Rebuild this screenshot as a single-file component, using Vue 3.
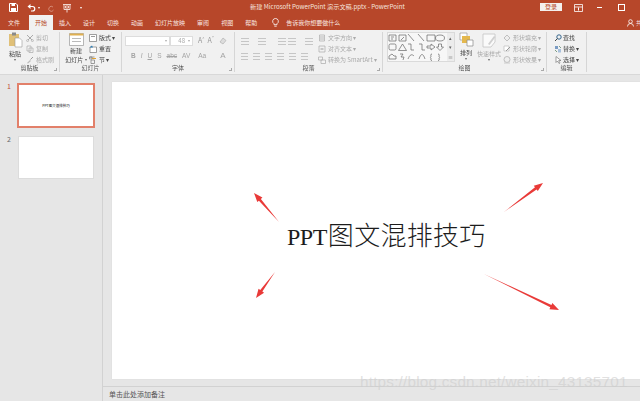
<template>
  <div class="app">
    <svg class="sprite" width="0" height="0">
      <symbol id="i-cut" viewBox="0 0 8 8"><path d="M1 1l5 5M7 1L2 6" fill="none" stroke="#aaa"/><circle cx="1.6" cy="6.6" r="1" fill="none" stroke="#aaa" stroke-width=".7"/><circle cx="6.4" cy="6.6" r="1" fill="none" stroke="#aaa" stroke-width=".7"/></symbol>
      <symbol id="i-copy" viewBox="0 0 8 8"><path d="M1 1h4v5H1zM3 3h4v4.500H3z" fill="#f4f4f4" stroke="#aaa" stroke-width=".7"/></symbol>
      <symbol id="i-brush" viewBox="0 0 8 8"><path d="M1 7l3-3 1 1-3 2.500z" fill="#bbb"/><path d="M4.500 3.500L7 1" stroke="#999" fill="none"/></symbol>
      <symbol id="i-layout" viewBox="0 0 8 8"><path d="M.5 .5h7v7h-7z" fill="#fff" stroke="#777" stroke-width=".7"/><path d="M2 2h4v1H2z" fill="#999"/></symbol>
      <symbol id="i-reset" viewBox="0 0 8 8"><path d="M1 2h6.500v5.500H1z" fill="#fff" stroke="#777" stroke-width=".7"/><path d="M.5 2.500L3 .5l1 2z" fill="#2b7cb5"/></symbol>
      <symbol id="i-section" viewBox="0 0 8 8"><path d="M.5 1h5M.5 1v2h2.500V1zM2 4h3.500v3.500H2z" fill="none" stroke="#777" stroke-width=".7"/><path d="M3 2h4v1H3z" fill="#e0a030"/></symbol>
      <symbol id="i-textdir" viewBox="0 0 8 8"><path d="M1.500 1h5v6h-5z" fill="none" stroke="#aaa" stroke-width=".7"/><path d="M3 2v4M5 2v4" stroke="#bbb"/></symbol>
      <symbol id="i-align" viewBox="0 0 8 8"><path d="M1 1h6v6H1z" fill="none" stroke="#aaa" stroke-width=".7"/><path d="M2.500 4h3" stroke="#999"/></symbol>
      <symbol id="i-smart" viewBox="0 0 8 8"><path d="M.5 1h4v3h-4zM3 4h4.500v3.500H3z" fill="#f4f4f4" stroke="#aaa" stroke-width=".7"/></symbol>
      <symbol id="i-fill" viewBox="0 0 8 8"><path d="M4 1l3 3-3 3-3-3z" fill="#eee" stroke="#aaa" stroke-width=".7"/></symbol>
      <symbol id="i-line" viewBox="0 0 8 8"><path d="M1 1h5v5H1z" fill="#fff" stroke="#bbb" stroke-width=".7"/><path d="M3 6l4-4" stroke="#999"/></symbol>
      <symbol id="i-effect" viewBox="0 0 8 8"><circle cx="4" cy="3.500" r="3" fill="#eee" stroke="#aaa" stroke-width=".7"/><path d="M1 7h6" stroke="#ccc"/></symbol>
      <symbol id="i-find" viewBox="0 0 8 8"><circle cx="5" cy="3" r="2.200" fill="none" stroke="#33658c"/><path d="M3.500 4.500L1 7" stroke="#444"/></symbol>
      <symbol id="i-replace" viewBox="0 0 8 8"><path d="M1 1h3v3H1z" fill="#7b9cc4"/><path d="M4 4h3v3.500H4z" fill="#a8c0dc"/><path d="M5 1l2 2M1 5l2 2" stroke="#4a7a58" fill="none" stroke-width=".7"/></symbol>
      <symbol id="i-select" viewBox="0 0 8 8"><path d="M2 .5v6l1.500-1.500 1.500 2.500 1-.6L4.700 4.500H7z" fill="#fff" stroke="#666" stroke-width=".6"/></symbol>
    </svg>

    <header class="titlebar">
      <div class="qat">
        <svg width="9" height="9" viewBox="0 0 9 9"><path d="M.5 .5h6.500l1.500 1.500v6.500h-8z" fill="none" stroke="#fff"/><path d="M2.500 .5h3.500v2.500h-3.500zM2 5h5v3.500H2z" fill="#fff"/></svg>
        <svg class="undo" width="9" height="9" viewBox="0 0 9 9"><path d="M2 3.500h3.500a2.200 2.200 0 0 1 0 4.500H4" fill="none" stroke="#fff" stroke-width="1.200"/><path d="M.5 3.500L3.500 1v5z" fill="#fff"/></svg>
        <span class="caret-w"></span>
        <svg class="redo" width="8" height="8" viewBox="0 0 8 8"><path d="M6 3a2.500 2.500 0 1 0 .5 3" fill="none" stroke="#d58a75"/></svg>
        <svg class="present" width="10" height="10" viewBox="0 0 10 10"><path d="M1 1.500h8M2 1.500v5h6v-5" fill="none" stroke="#f0d5cd"/><path d="M3.500 3h3v2h-3zM5 6.500v3" stroke="#f0d5cd" fill="none"/></svg>
        <span class="caret-w last"></span>
      </div>
      <div class="doc-title">新建 Microsoft PowerPoint 演示文稿.pptx  -  PowerPoint</div>
      <button class="login">登录</button>
      <svg class="win first" width="9" height="8" viewBox="0 0 9 8"><path d="M.5 .5h8v7h-8zM.5 3h8" fill="none" stroke="#fff" stroke-width=".8"/><path d="M4.500 3.500v3" stroke="#fff"/></svg>
      <span class="win-min"></span>
      <span class="win-max"></span>
    </header>

    <nav class="tabs">
      <span v-for="t in tabs" :key="t" class="tab" :class="{ active: t === '开始', file: t === '文件' }">{{ t }}</span>
      <svg class="bulb" width="7" height="9" viewBox="0 0 7 9"><path d="M3.500 .5a2.800 2.800 0 0 1 1.500 5.200v1H2v-1A2.800 2.800 0 0 1 3.500 .5zM2.300 8.200h2.400" fill="none" stroke="#fff" stroke-width=".8"/></svg>
      <span class="tell">告诉我你想要做什么</span>
      <span class="share">
        <svg width="7" height="8" viewBox="0 0 7 8"><circle cx="3.500" cy="2.500" r="1.800" fill="none" stroke="#fff" stroke-width=".8"/><path d="M.5 7.500a3 3 0 0 1 6 0" fill="none" stroke="#fff" stroke-width=".8"/></svg>
        共享
      </span>
    </nav>

    <section class="ribbon">
      <div class="grp" style="width: 60px">
        <div class="body">
          <div class="big paste">
            <svg width="15" height="16" viewBox="0 0 15 16"><path d="M1 2h10v12H1z" fill="#e0c078"/><path d="M4 .5h4v3H4z" fill="#8a8a8a"/><path d="M7 6h4.500L14 8.500V15H7z" fill="#fff" stroke="#999" stroke-width=".6"/></svg>
            <span>粘贴</span>
            <i class="caret"></i>
          </div>
          <div class="col off">
            <div v-for="r in clipboard" :key="r.text" class="row"><svg><use :href="'#i-' + r.icon" /></svg>{{ r.text }}</div>
          </div>
        </div>
        <div class="label">剪贴板</div>
        <i class="launch"></i>
      </div>

      <div class="grp" style="width: 62px">
        <div class="body slides">
          <div class="big newslide">
            <svg width="15" height="14" viewBox="0 0 15 14"><path d="M.5 1.500h14v12H.5z" fill="#fff" stroke="#999" stroke-width=".7"/><path d="M.5 1.500h14v2H.5z" fill="#e0b050"/><path d="M3 6h9v1H3zM3 9h9v1H3z" fill="#bbb"/></svg>
            <span>新建</span>
            <span class="nowrap">幻灯片 <i class="caret in"></i></span>
          </div>
          <div class="col">
            <div v-for="r in slidesMenu" :key="r.text" class="row"><svg><use :href="'#i-' + r.icon" /></svg>{{ r.text }}</div>
          </div>
        </div>
        <div class="label">幻灯片</div>
      </div>

      <div class="grp" style="width: 113px">
        <div class="body font">
          <div class="inputs">
            <span class="inp name"><i class="caret"></i></span>
            <span class="inp size">48<i class="caret"></i></span>
            <span class="glyph g1">A<sup>^</sup></span>
            <span class="glyph g2">A<sup>ˇ</sup></span>
            <svg class="eraser" width="8" height="8" viewBox="0 0 8 8"><path d="M1 5l3-4 3 2.500-3 3.500z" fill="#ddd" stroke="#aaa" stroke-width=".6"/></svg>
          </div>
          <div class="fmt">
            <b>B</b><em>I</em><u>U</u><span>S</span><s>abc</s><span>AV</span><span class="wide">Aa</span><span class="wide2">A</span>
          </div>
        </div>
        <div class="label">字体</div>
        <i class="launch"></i>
      </div>

      <div class="grp" style="width: 148px">
        <div class="body para">
          <div class="para-icons">
            <div class="para-row">
              <i v-for="n in 5" :key="n" class="lines" :class="'p' + n"></i>
            </div>
            <div class="para-row second">
              <i v-for="n in 6" :key="n" class="lines flat"></i>
            </div>
          </div>
          <div class="col off">
            <div v-for="r in paraMenu" :key="r.text" class="row"><svg><use :href="'#i-' + r.icon" /></svg>{{ r.text }}</div>
          </div>
        </div>
        <div class="label">段落</div>
        <i class="launch"></i>
      </div>

      <div class="grp" style="width: 164px">
        <div class="body draw">
          <div class="gallery">
            <svg width="59" height="28" viewBox="0 0 59 28" fill="none" stroke="#666" stroke-width=".7">
              <!-- row 1: text boxes, lines, rectangle, ellipse -->
              <path d="M1 2h7v6H1zM3 4h3M3 6h2M11 2h7v6h-7zM13 7l3-3" />
              <path d="M20 1l6 7M30 1l6 7" />
              <path d="M39 2h8v6h-8z" />
              <ellipse cx="52" cy="5" rx="4.500" ry="3" />
              <!-- row 2: rounded rect, triangle, elbows, arrows -->
              <rect x="1" y="11" width="7" height="6" rx="1.500" />
              <path d="M14.500 11l4 6.500h-8zM20 11h3v6h3M31 11h3v6h3" />
              <path d="M39 13h4v-2l4 3-4 3v-2h-4zM50.500 11h3v3h2l-3.500 3.500-3.500-3.500h2z" />
              <!-- row 3: freeform, cross, curves, braces -->
              <path d="M1 26v-3l3-2 2 2 2 0v3zM12 21h3l-2 3h3l-1 3" />
              <path d="M20 26c2-5 4-5 6-3M31 26c2-6 4-6 6 0" />
              <path d="M44 21c-2 0-1 2-1 2.500s-1 1-1 1 1 .5 1 1 -1 2 1 2M50 21c2 0 1 2 1 2.500s1 1 1 1-1 .5-1 1 1 2-1 2" />
            </svg>
            <div class="scroll"><i>▴</i><i>▾</i><i>≡</i></div>
          </div>
          <div class="big arrange">
            <svg width="15" height="15" viewBox="0 0 15 15"><path d="M1 1h7v7H1z" fill="#fff" stroke="#999" stroke-width=".7"/><path d="M3 4h8v7H3z" fill="#e4b84e"/><path d="M8 8h6v6H8z" fill="#fff" stroke="#888" stroke-width=".7"/></svg>
            <span>排列</span>
            <i class="caret"></i>
          </div>
          <div class="big style off">
            <svg width="15" height="16" viewBox="0 0 15 16"><path d="M1 2h12v8l-4 5H1z" fill="#fafafa" stroke="#c4c4c4" stroke-width=".8"/><path d="M6 12l6-8 1.500 1-6 8z" fill="#d0d0d0"/></svg>
            <span>快速样式</span>
            <i class="caret"></i>
          </div>
          <div class="col off">
            <div v-for="r in shapeMenu" :key="r.text" class="row"><svg><use :href="'#i-' + r.icon" /></svg>{{ r.text }}</div>
          </div>
        </div>
        <div class="label">绘图</div>
        <i class="launch"></i>
      </div>

      <div class="grp" style="width: 40px">
        <div class="body edit">
          <div class="col">
            <div v-for="r in editMenu" :key="r.text" class="row"><svg><use :href="'#i-' + r.icon" /></svg>{{ r.text }}</div>
          </div>
        </div>
        <div class="label">编辑</div>
      </div>
    </section>

    <main class="main">
      <aside class="thumbs">
        <div class="thumb-row">
          <span class="num sel">1</span>
          <div class="thumb current">PPT图文混排技巧</div>
        </div>
        <div class="thumb-row">
          <span class="num">2</span>
          <div class="thumb blank"></div>
        </div>
      </aside>

      <div class="work">
        <div class="stage">
          <div class="slide">
            <div class="headline"><span class="latin">PPT</span>图文混排技巧</div>
            <svg class="arrows" width="527" height="296" viewBox="0 0 527 296">
              <polygon v-for="(a, i) in arrows" :key="i" :points="a" fill="#e93a38" />
            </svg>
          </div>
        </div>
        <footer class="notes">单击此处添加备注</footer>
      </div>
    </main>

    <div class="watermark">https://blog.csdn.net/weixin_43135701</div>
  </div>
</template>

<script setup>
const tabs = ['文件', '开始', '插入', '设计', '切换', '动画', '幻灯片放映', '审阅', '视图', '帮助'];

const clipboard = [
  { icon: 'cut', text: '剪切' },
  { icon: 'copy', text: '复制' },
  { icon: 'brush', text: '格式刷' }
];
const slidesMenu = [
  { icon: 'layout', text: '版式 ▾' },
  { icon: 'reset', text: '重置' },
  { icon: 'section', text: '节 ▾' }
];
const paraMenu = [
  { icon: 'textdir', text: '文字方向 ▾' },
  { icon: 'align', text: '对齐文本 ▾' },
  { icon: 'smart', text: '转换为 SmartArt ▾' }
];
const shapeMenu = [
  { icon: 'fill', text: '形状填充 ▾' },
  { icon: 'line', text: '形状轮廓 ▾' },
  { icon: 'effect', text: '形状效果 ▾' }
];
const editMenu = [
  { icon: 'find', text: '查找' },
  { icon: 'replace', text: '替换 ▾' },
  { icon: 'select', text: '选择 ▾' }
];

// tail and head in slide coordinates; slide starts at 112,81
const arrowLines = [
  [167, 140, 142, 111],
  [392, 130, 431, 101],
  [163, 190, 144, 216],
  [372, 192, 447, 228]
];

const arrowPoints = ([x1, y1, x2, y2]) => {
  const len = Math.hypot(x2 - x1, y2 - y1);
  const dx = (x2 - x1) / len;
  const dy = (y2 - y1) / len;
  const neckX = x2 - dx * 9;
  const neckY = y2 - dy * 9;
  const at = (w) => `${neckX - dy * w},${neckY + dx * w}`;
  return [`${x1},${y1}`, at(1.3), at(3.4), `${x2},${y2}`, at(-3.4), at(-1.3)].join(' ');
};

const arrows = arrowLines.map(arrowPoints);
</script>

<style scoped>
.app { position: relative; width: 640px; height: 401px; overflow: hidden; display: flex; flex-direction: column; background: #e6e6e6; color: #444; font-family: "Noto Sans CJK SC", "Noto Sans", sans-serif; font-size: 6px; line-height: 1; }
.sprite { position: absolute; }

.titlebar { height: 15px; flex: none; display: flex; align-items: center; background: #b7472a; color: #fff; }
.qat { width: 250px; flex: none; display: flex; align-items: center; padding-left: 9px; box-sizing: border-box; }
.undo { margin-left: 9px; }
.caret-w { width: 0; height: 0; margin-left: 2px; border: 1.5px solid transparent; border-top: 2px solid #fff; border-bottom: 0; }
.caret-w.last { margin-left: 8px; }
.redo { margin-left: 7px; }
.present { margin-left: 7px; }
.doc-title { width: 290px; flex: none; font-size: 6.2px; white-space: pre; color: #f6e4de; }
.login { width: 22px; height: 8px; padding: 0; margin-top: -2px; border: 0; background: #f4f0ee; color: #b7472a; font: inherit; line-height: 8px; }
.win.first { margin-left: 12px; }
.win-min { width: 5px; height: 1px; margin-left: 14px; background: #fff; }
.win-max { width: 5px; height: 5px; margin-left: 16px; border: 1px solid #fff; }

.tabs { height: 15px; flex: none; display: flex; align-items: center; padding-left: 2px; background: #b7472a; color: #f8e6e0; }
.tab { height: 15px; padding: 0 6px; line-height: 15px; white-space: nowrap; }
.tab.file { margin-right: 3px; }
.tab.active { background: #f1f1f1; color: #b7472a; }
.bulb { margin-left: 9px; }
.tell { margin-left: 7px; }
.share { margin-left: auto; margin-right: -8px; display: flex; align-items: center; gap: 2px; }

.ribbon { height: 44px; flex: none; display: flex; background: #f1f1f1; border-bottom: 1px solid #d8d8d8; filter: blur(.25px); }
.grp { position: relative; flex: none; box-sizing: border-box; display: flex; flex-direction: column; border-right: 1px solid #d6d6d6; margin: 2px 0 2px; }
.body { height: 33px; display: flex; }
.label { text-align: center; color: #555; height: 7px; }
.launch { position: absolute; right: 2px; bottom: 1px; width: 2px; height: 2px; border-right: 1px solid #aaa; border-bottom: 1px solid #aaa; }

.big { display: flex; flex-direction: column; align-items: center; flex: none; }
.big span { line-height: 7px; }
.big svg { margin-bottom: 2px; }
.paste { width: 22px; margin-left: 4px; }
.caret { display: block; width: 0; height: 0; margin-top: 2px; border: 1.5px solid transparent; border-top: 2px solid #666; border-bottom: 0; }
.caret.in { display: inline-block; margin: 0 0 1px; }
.nowrap { white-space: nowrap; }

.col { display: flex; flex-direction: column; }
.row { height: 11px; display: flex; align-items: center; white-space: nowrap; }
.row svg { width: 8px; height: 8px; margin-right: 2px; flex: none; }
.off { color: #aaa; }

.newslide { width: 28px; margin: 0 0 0 2px; }
.newslide svg { margin-bottom: 0; }
.newslide span { line-height: 9px; }
.slides .col { margin-left: -1px; margin-top: 0; }

.font { flex-direction: column; padding-left: 3px; }
.inputs { height: 13px; margin-top: 2px; display: flex; align-items: center; }
.inp { height: 10px; box-sizing: border-box; background: #fff; border: 1px solid #ddd; display: flex; align-items: center; justify-content: flex-end; padding-right: 2px; color: #aaa; }
.inp .caret { margin: 0 0 0 3px; border-top-color: #aaa; }
.inp.name { width: 45px; }
.inp.size { width: 23px; }
.glyph { color: #999; font-size: 7px; }
.glyph sup { font-size: 4px; }
.g1 { margin-left: 5px; }
.g2 { margin-left: 3px; }
.eraser { margin-left: 5px; }
.fmt { height: 12px; margin-top: 3px; display: flex; align-items: center; gap: 5px; padding-left: 6px; color: #a4a4a4; font-size: 6.5px; font-family: "Liberation Sans", sans-serif; }
.fmt .wide { margin-left: 3px; }
.fmt .wide2 { margin-left: 9px; font-size: 8px; }

.para { justify-content: space-between; padding: 0 6px 0 6px; }
.para-icons { width: 78px; }
.para-row { height: 10px; margin-top: 4px; display: flex; gap: 7px; align-items: center; }
.para-row.second { margin-top: 5px; }
.lines { width: 8px; height: 7px; background: repeating-linear-gradient(#c6c6c6 0 1px, transparent 1px 3px); }
.lines.p2 { margin-left: 2px; }
.lines.p3 { margin-left: 5px; }
.lines.p4 { margin-left: -5px; }
.lines.p5 { margin-left: 2px; }
.lines.flat { width: 7px; margin-right: -2px; }
.para .col { width: 58px; }

.draw { padding-left: 4px; }
.gallery { width: 68px; height: 30px; flex: none; box-sizing: border-box; display: flex; background: #f7f7f7; border: 1px solid #dadada; }
.scroll { flex: 1; display: flex; flex-direction: column; justify-content: space-around; align-items: center; background: #ececec; font-size: 5px; color: #666; }
.scroll i { font-style: normal; }
.arrange { width: 16px; margin-left: 3px; }
.style { width: 24px; margin-left: 3px; }
.draw .col { margin-left: 2px; }

.edit { padding-left: 7px; }
.edit svg { margin-right: 1px; }

.main { flex: 1; min-height: 0; display: flex; }
.thumbs { width: 103px; flex: none; box-sizing: border-box; padding-top: 8px; border-right: 1px solid #d2d2d2; }
.thumb-row { display: flex; margin-bottom: 8px; }
.num { width: 17px; flex: none; padding-left: 7px; box-sizing: border-box; font-size: 7px; color: #666; }
.num.sel { color: #c0503a; }
.thumb { background: #fff; box-sizing: border-box; }
.thumb.current { width: 78px; height: 45px; border: 2px solid #e2806a; display: flex; align-items: center; justify-content: center; font-size: 3.500px; color: #111; }
.thumb.blank { width: 76px; height: 43px; border: 1px solid #dcdcdc; margin-left: 1px; }

.work { flex: 1; min-width: 0; display: flex; flex-direction: column; }
.stage { height: 312px; flex: none; box-sizing: border-box; padding: 7px 0 0 9px; border-bottom: 1px solid #d2d2d2; }
.slide { position: relative; height: 297px; overflow: hidden; background: #fff; box-shadow: 0 0 1px #ccc; }
.headline { position: absolute; left: 175px; top: 138px; white-space: nowrap; font-family: "Liberation Serif", "Noto Sans CJK SC", serif; font-size: 26px; line-height: 34px; color: #1c1c1c; letter-spacing: .3px; font-weight: 300; }
.latin { font-size: 24px; letter-spacing: -.5px; margin-right: 1px; }
.arrows { position: absolute; left: 0; top: 0; }
.notes { flex: 1; display: flex; align-items: center; padding-left: 6px; font-size: 7px; color: #555; }

.watermark { position: absolute; left: 360px; top: 372px; font-family: "Liberation Sans", sans-serif; font-size: 15.300px; line-height: 20px; color: rgba(205, 205, 205, .6); letter-spacing: .2px; white-space: nowrap; }
</style>
